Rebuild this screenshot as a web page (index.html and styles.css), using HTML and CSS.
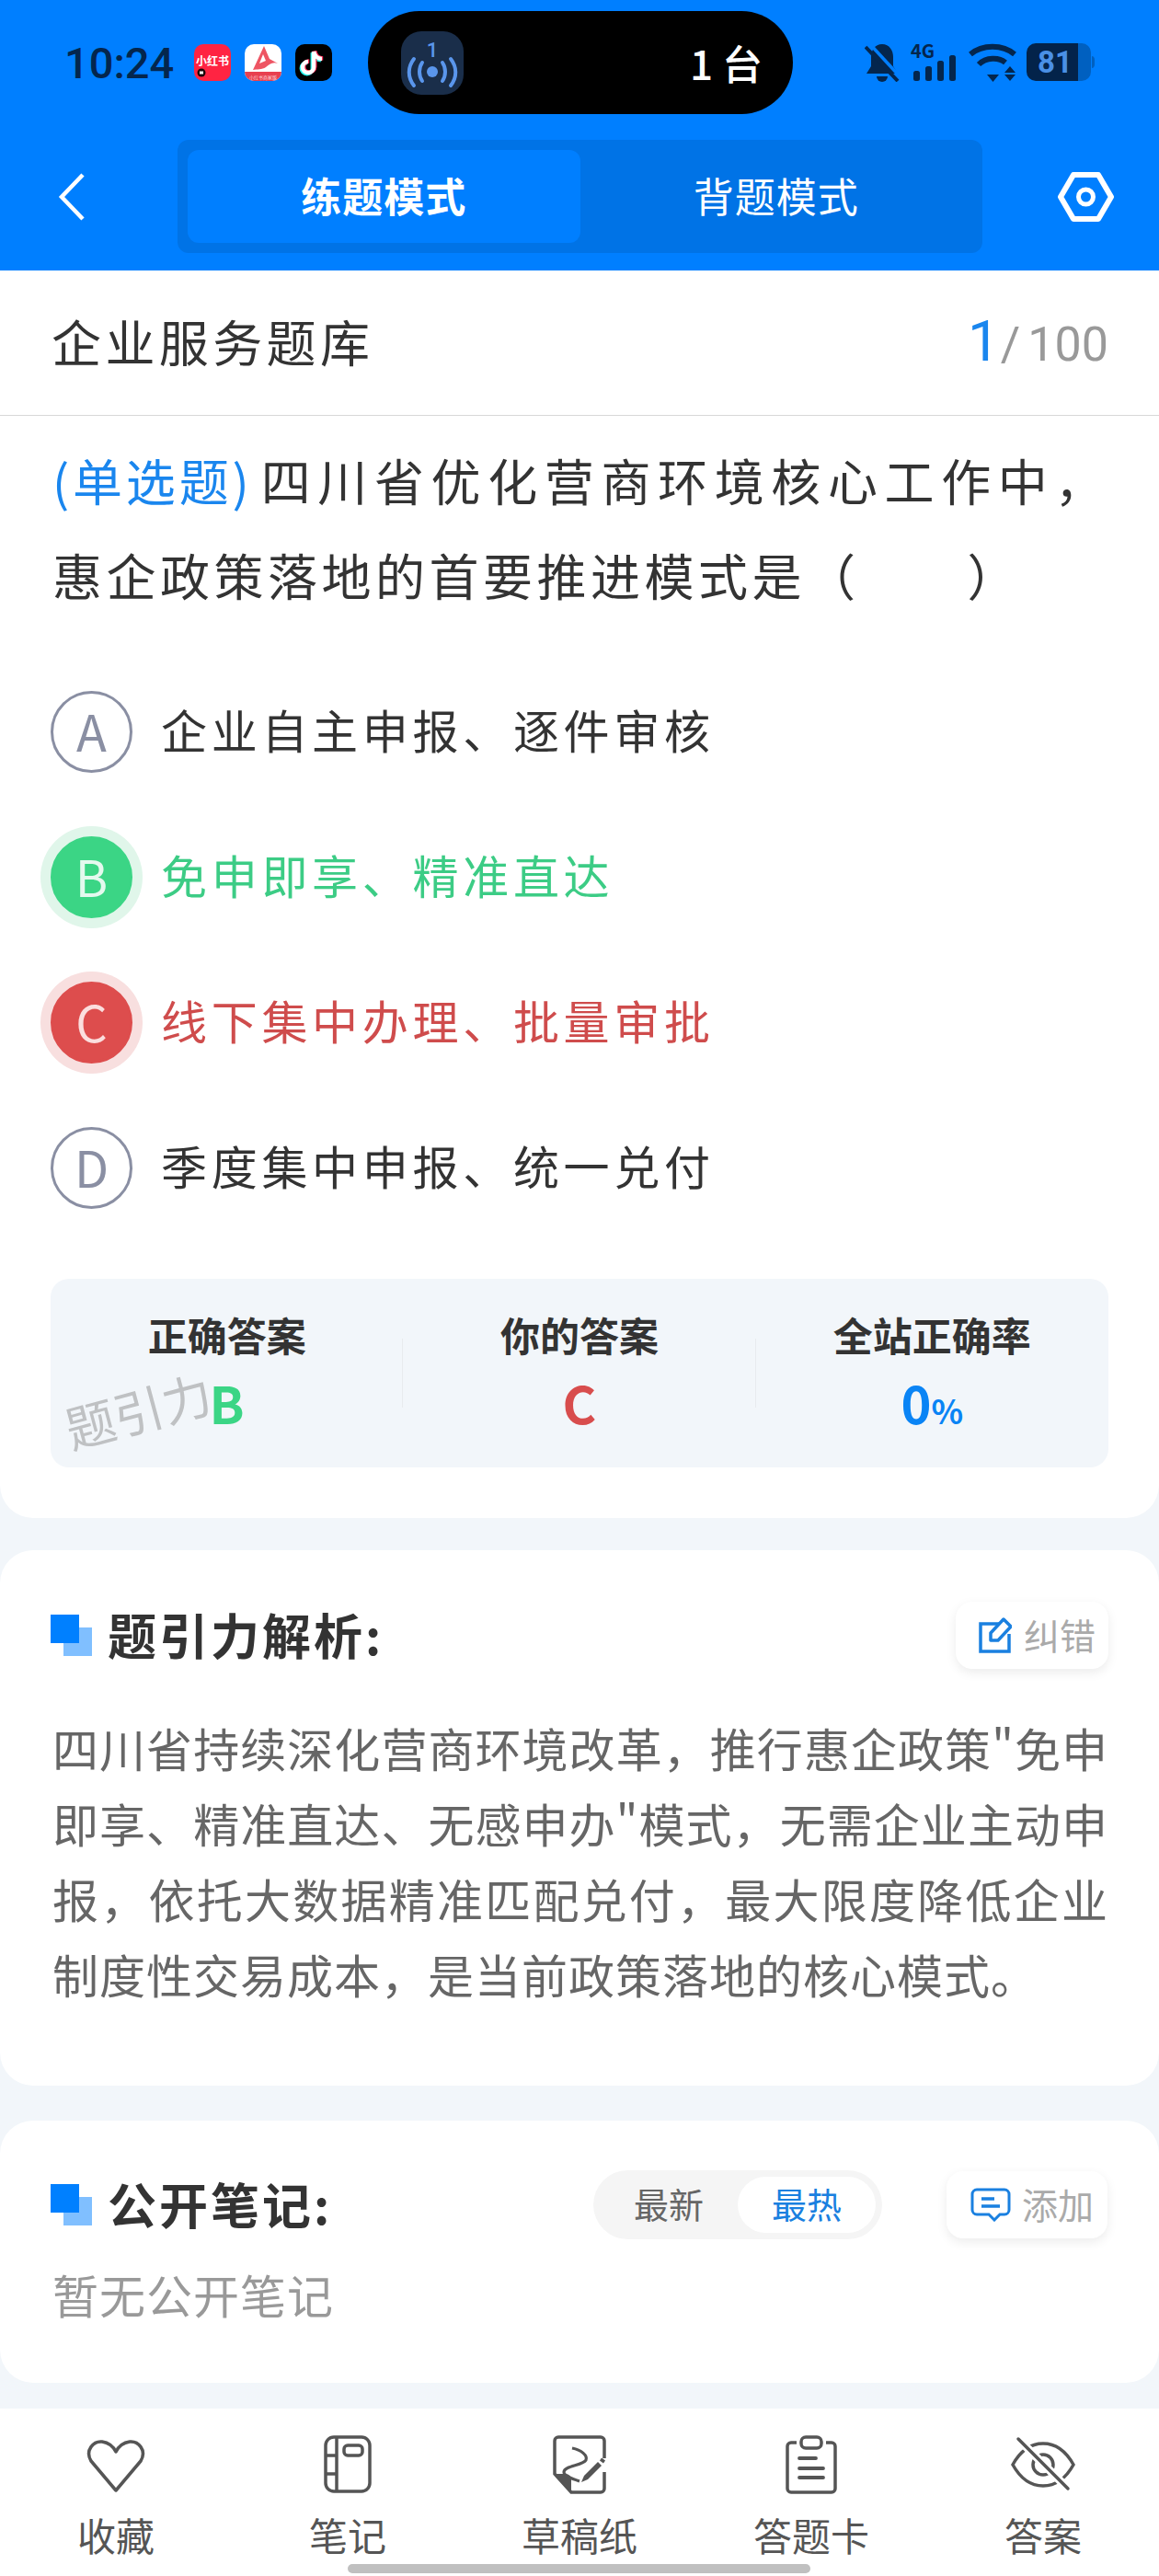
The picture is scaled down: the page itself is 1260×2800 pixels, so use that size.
FILE: index.html
```html
<!DOCTYPE html>
<html lang="zh-CN">
<head>
  <meta charset="UTF-8">
  <title>企业服务题库</title>
  <link rel="stylesheet" href="styles.css">
</head>
<body>
  <div class="app">
    <header class="top">
      <div class="status">
        <span class="time">10:24</span>
        <div class="apps">
          <svg class="app-icon" viewBox="0 0 40 40">
            <rect width="40" height="40" rx="10" fill="#ff2442"/>
            <text x="20" y="23" text-anchor="middle" class="xhs">小红书</text>
            <circle cx="8" cy="31" r="4.5" fill="#1a0508"/>
            <rect x="6" y="29.5" width="4" height="3" fill="#fff"/>
          </svg>
          <svg class="app-icon" viewBox="0 0 40 40">
            <rect width="40" height="40" rx="10" fill="#fff"/>
            <path d="M0 30H40A10 10 0 0 1 30 40H10A10 10 0 0 1 0 30Z" fill="#e8404f"/>
            <path d="M21 2L27 16L36 21C30 19 27 22 23 25C19 28 13 27 9 28Z" fill="#ee5563"/>
            <path d="M20 11L23 18L16 21Z" fill="#fff"/>
            <text x="20" y="38" text-anchor="middle" class="biz">小红书商家版</text>
          </svg>
          <svg class="app-icon" viewBox="0 0 40 40">
            <rect width="40" height="40" rx="10" fill="#000"/>
            <g fill="none" stroke-width="4.5">
              <path d="M20 8V25A6 6 0 1 1 14 19M20 8C21 13 25 16 29 16" stroke="#25f4ee" transform="translate(-1.2 1.2)"/>
              <path d="M20 8V25A6 6 0 1 1 14 19M20 8C21 13 25 16 29 16" stroke="#fe2c55" transform="translate(1.2 -.6)"/>
              <path d="M20 8V25A6 6 0 1 1 14 19M20 8C21 13 25 16 29 16" stroke="#fff"/>
            </g>
          </svg>
        </div>
        <div class="island">
          <svg class="island-icon" viewBox="0 0 68 69">
            <rect width="68" height="69" rx="22" fill="#1a2e4a"/>
            <text x="34" y="28" text-anchor="middle" class="cast-num">1</text>
            <circle cx="34" cy="44" r="6" fill="#5a96ec"/>
            <g fill="none" stroke="#5a96ec" stroke-width="4" stroke-linecap="round">
              <path d="M23 34C19 40 19 48 23 54M45 34C49 40 49 48 45 54"/>
              <path d="M14 30C7 39 7 50 14 59M54 30C61 39 61 50 54 59"/>
            </g>
          </svg>
          <span class="island-text">1 台</span>
        </div>
        <div class="sys">
          <svg class="ic-bell" viewBox="0 0 38 42">
            <path d="M19 1C27 1 31 8 31 15V25L36 33H2L7 25V15C7 8 11 1 19 1Z" fill="#04264d"/>
            <path d="M13 36H25A6 6 0 0 1 13 36Z" fill="#04264d"/>
            <path d="M4 -1L39 37" stroke="#007fff" stroke-width="3.5"/>
            <path d="M1 4L36 41" stroke="#04264d" stroke-width="4"/>
          </svg>
          <svg class="ic-signal" viewBox="0 -10 50 52">
            <text x="0" y="16" class="net">4G</text>
            <g fill="#04264d">
              <rect x="3" y="30" width="7" height="11" rx="2.5"/>
              <rect x="16" y="25" width="7" height="16" rx="2.5"/>
              <rect x="29" y="19" width="7" height="22" rx="2.5"/>
              <rect x="42" y="13" width="7" height="28" rx="2.5"/>
            </g>
          </svg>
          <svg class="ic-wifi" viewBox="0 0 52 42">
            <path d="M2 12C15 1 37 1 50 12" fill="none" stroke="#04264d" stroke-width="6"/>
            <path d="M11 23C19 15 33 15 40 21" fill="none" stroke="#04264d" stroke-width="6"/>
            <path d="M20 34H33L26.5 42Z" fill="#04264d"/>
            <path d="M45 25L51 32H39ZM39 34H51L45 41Z" fill="#04264d"/>
          </svg>
          <svg class="ic-batt" viewBox="0 0 74 42">
            <path d="M10 0H56V41H10A10 10 0 0 1 0 31V10A10 10 0 0 1 10 0Z" fill="#03234a"/>
            <path d="M56 0H60A10 10 0 0 1 70 10V31A10 10 0 0 1 60 41H56Z" fill="#0060c0"/>
            <path d="M71 14C73 14 74 16 74 18V23C74 25 73 27 71 27Z" fill="#0060c0"/>
            <text x="31" y="32" text-anchor="middle" class="batt">81</text>
          </svg>
        </div>
      </div>
      <nav class="nav">
        <svg class="back" viewBox="0 0 30 52">
          <path d="M27 2L4 26L27 50" fill="none" stroke="#fff" stroke-width="4.5"/>
        </svg>
        <div class="mode">
          <div class="mode-item on">练题模式</div>
          <div class="mode-item">背题模式</div>
        </div>
        <svg class="gear" viewBox="0 0 61 54">
          <path d="M17 3H44L58 27L44 51H17L3 27Z" fill="none" stroke="#fff" stroke-width="6" stroke-linejoin="round"/>
          <circle cx="30.5" cy="27" r="8" fill="none" stroke="#fff" stroke-width="5"/>
        </svg>
      </nav>
    </header>

    <section class="card card-main">
      <div class="bank">
        <span class="bank-name">企业服务题库</span>
        <span class="count"><b>1</b><i>/</i>100</span>
      </div>
      <div class="question">
        <div class="q-line first"><span class="q-type">(单选题)</span><span>四川省优化营商环境核心工作中，</span></div>
        <div class="q-line">惠企政策落地的首要推进模式是（　　）</div>
      </div>
      <ul class="options">
        <li class="opt"><span class="letter">A</span><span class="opt-text">企业自主申报、逐件审核</span></li>
        <li class="opt right"><span class="letter">B</span><span class="opt-text">免申即享、精准直达</span></li>
        <li class="opt wrong"><span class="letter">C</span><span class="opt-text">线下集中办理、批量审批</span></li>
        <li class="opt"><span class="letter">D</span><span class="opt-text">季度集中申报、统一兑付</span></li>
      </ul>
      <div class="result">
        <div class="res-col">
          <div class="res-label">正确答案</div>
          <div class="res-val green">B</div>
        </div>
        <div class="res-col">
          <div class="res-label">你的答案</div>
          <div class="res-val red">C</div>
        </div>
        <div class="res-col">
          <div class="res-label">全站正确率</div>
          <div class="res-val blue">0<small>%</small></div>
        </div>
        <span class="watermark">题引力</span>
      </div>
    </section>

    <section class="card card-note">
      <div class="sec-head">
        <svg class="sec-icon" viewBox="0 0 45 45">
          <rect x="14" y="14" width="31" height="31" fill="#80bfff"/>
          <rect width="31" height="31" fill="#0080ff"/>
        </svg>
        <h3 class="sec-title">题引力解析:</h3>
        <div class="tool-btn fix">
          <svg class="ic-pen" viewBox="0 0 36 40">
            <path d="M22 7H2V37H33V18" fill="none" stroke="#1a80e0" stroke-width="3.5"/>
            <path d="M13 25V17L27 2L35 10L21 25Z" fill="none" stroke="#1a80e0" stroke-width="3.5" stroke-linejoin="round"/>
          </svg>
          <span class="tool-text">纠错</span>
        </div>
      </div>
      <p class="analysis">四川省持续深化营商环境改革，推行惠企政策"免申即享、精准直达、无感申办"模式，无需企业主动申报，依托大数据精准匹配兑付，最大限度降低企业制度性交易成本，是当前政策落地的核心模式。</p>
    </section>

    <section class="card card-public">
      <div class="sec-head">
        <svg class="sec-icon" viewBox="0 0 45 45">
          <rect x="14" y="14" width="31" height="31" fill="#80bfff"/>
          <rect width="31" height="31" fill="#0080ff"/>
        </svg>
        <h3 class="sec-title">公开笔记:</h3>
        <div class="sort">
          <span class="sort-item">最新</span>
          <span class="sort-item on">最热</span>
        </div>
        <div class="tool-btn add">
          <svg class="ic-msg" viewBox="0 0 44 37">
            <path d="M7 2H37A5 5 0 0 1 42 7V24A5 5 0 0 1 37 29H32L26 35L20 29H7A5 5 0 0 1 2 24V7A5 5 0 0 1 7 2Z" fill="none" stroke="#1a80e0" stroke-width="3"/>
            <path d="M12 12H26M12 20H32" stroke="#1a80e0" stroke-width="3.5"/>
          </svg>
          <span class="tool-text">添加</span>
        </div>
      </div>
      <p class="empty">暂无公开笔记</p>
    </section>

    <footer class="tabs">
      <div class="tab">
        <svg class="tab-ic" viewBox="0 0 70 64">
          <path d="M35 60L8 28C1 16 11 6 20 7C27 8 32 12 35 18C38 12 43 8 50 7C59 6 69 16 62 28Z" fill="none" stroke="#555" stroke-width="3.5" stroke-linejoin="round"/>
        </svg>
        <span>收藏</span>
      </div>
      <div class="tab">
        <svg class="tab-ic" viewBox="0 0 70 64">
          <rect x="11" y="2" width="48" height="59" rx="9" fill="none" stroke="#555" stroke-width="3.5"/>
          <path d="M23 2V61M11 22H23M11 42H23" fill="none" stroke="#555" stroke-width="3.5"/>
          <rect x="31" y="11" width="20" height="11" rx="4" fill="none" stroke="#555" stroke-width="3.5"/>
        </svg>
        <span>笔记</span>
      </div>
      <div class="tab">
        <svg class="tab-ic" viewBox="0 0 70 64">
          <path d="M62 25V6A4 4 0 0 0 58 2H12A4 4 0 0 0 8 6V42L26 62H58A4 4 0 0 0 62 58V40" fill="none" stroke="#555" stroke-width="3.5"/>
          <path d="M8 42H20A6 6 0 0 1 26 48V62Z" fill="#555"/>
          <path d="M27 14C37 16 44 22 42 27C39 33 18 33 18 40C18 44 26 47 35 50" fill="none" stroke="#555" stroke-width="3.2"/>
          <path d="M40 44L37 51L44 48L59 33L55 29Z" fill="#555"/>
          <path d="M58 26L62 29" stroke="#555" stroke-width="3.5"/>
        </svg>
        <span>草稿纸</span>
      </div>
      <div class="tab">
        <svg class="tab-ic" viewBox="0 0 70 64">
          <path d="M19 8H13A4 4 0 0 0 9 12V58A4 4 0 0 0 13 62H57A4 4 0 0 0 61 58V12A4 4 0 0 0 57 8H51" fill="none" stroke="#555" stroke-width="3.5"/>
          <rect x="24" y="2" width="22" height="12" rx="5" fill="none" stroke="#555" stroke-width="3.5"/>
          <path d="M22 25H40M22 36H48M22 46H48" stroke="#555" stroke-width="3.8" stroke-linecap="round"/>
        </svg>
        <span>答题卡</span>
      </div>
      <div class="tab">
        <svg class="tab-ic" viewBox="0 0 70 64">
          <path d="M2 32C12 14 24 9 35 9C46 9 58 14 68 32C58 50 46 55 35 55C24 55 12 50 2 32Z" fill="none" stroke="#555" stroke-width="3.5"/>
          <path d="M24 32A11 11 0 0 1 46 32A11 11 0 0 1 24 32Z" fill="none" stroke="#555" stroke-width="3.5"/>
          <path d="M8 4L62 58" stroke="#fff" stroke-width="9"/>
          <path d="M8 4L62 58" stroke="#555" stroke-width="3.5" stroke-linecap="round"/>
        </svg>
        <span>答案</span>
      </div>
      <div class="home-bar"></div>
    </footer>
  </div>
</body>
</html>
```

FILE: styles.css
```css
* {
  box-sizing: border-box;
}
body {
  margin: 0;
  font-family: "Noto Sans CJK SC", "Noto Sans", sans-serif;
  color: #333;
  background: #f2f6fa;
}
p, ul, h3 {
  margin: 0;
  padding: 0;
}
svg {
  display: block;
  flex: none;
}
.app {
  width: 1260px;
  height: 2800px;
  overflow: hidden;
  display: flex;
  flex-direction: column;
}

/* header */
.top {
  height: 294px;
  background: #007fff;
  padding-top: 12px;
}
.status {
  height: 112px;
  display: flex;
  align-items: center;
  padding-left: 70px;
}
.time {
  width: 141px;
  font-family: Roboto, sans-serif;
  font-weight: 500;
  font-size: 47px;
  color: #04264d;
}
.apps {
  display: flex;
  gap: 15px;
}
.app-icon {
  width: 40px;
  height: 40px;
}
.xhs {
  font-size: 12px;
  font-weight: 700;
  fill: #fff;
}
.biz {
  font-size: 5px;
  fill: #ffd5d9;
}
.island {
  margin-left: 39px;
  width: 462px;
  height: 112px;
  border-radius: 56px;
  background: #000;
  display: flex;
  align-items: center;
  justify-content: space-between;
  padding: 0 33px 0 36px;
}
.island-icon {
  width: 68px;
  height: 69px;
}
.cast-num {
  font-family: Roboto, sans-serif;
  font-size: 22px;
  font-weight: 500;
  fill: #5a96ec;
}
.island-text {
  color: #fff;
  font-size: 44px;
  font-weight: 500;
  line-height: 1;
}
.sys {
  margin-left: 78px;
  display: flex;
  align-items: center;
}
.ic-bell {
  width: 38px;
  height: 42px;
}
.ic-signal {
  width: 50px;
  height: 52px;
  margin: -10px 0 0 12px;
}
.ic-wifi {
  width: 52px;
  height: 42px;
  margin-left: 13px;
}
.ic-batt {
  width: 74px;
  height: 42px;
  margin-left: 11px;
}
.net {
  font-size: 20px;
  font-weight: 700;
  fill: #04264d;
}
.batt {
  font-family: Roboto, sans-serif;
  font-size: 33px;
  font-weight: 700;
  fill: #4a90e6;
}
.nav {
  margin-top: 28px;
  height: 123px;
  display: flex;
  align-items: center;
  padding-left: 63px;
}
.back {
  width: 30px;
  height: 52px;
}
.mode {
  margin-left: 100px;
  width: 875px;
  height: 123px;
  padding: 11px;
  background: #0073e6;
  border-radius: 12px;
  display: flex;
}
.mode-item {
  flex: 1;
  border-radius: 12px;
  padding-bottom: 4px;
  color: #fff;
  font-size: 44px;
  letter-spacing: 1px;
  display: flex;
  align-items: center;
  justify-content: center;
}
.mode-item.on {
  background: #007fff;
  font-weight: 700;
}
.gear {
  width: 61px;
  height: 54px;
  margin-left: 82px;
}

/* cards */
.card {
  background: #fff;
  border-radius: 36px;
}
.card-main {
  height: 1356px;
  border-radius: 0 0 36px 36px;
}
.bank {
  height: 158px;
  padding: 0 55px 4px 56px;
  border-bottom: 1px solid #d8d8d8;
  display: flex;
  align-items: center;
  justify-content: space-between;
}
.bank-name {
  font-size: 54px;
  letter-spacing: 4.4px;
}
.count {
  font-family: Roboto, sans-serif;
  font-size: 52px;
  color: #999;
}
.count b {
  font-weight: 400;
  font-size: 62px;
  color: #1a86ee;
}
.count i {
  font-style: normal;
  margin: 0 8px 0 1px;
}
.question {
  padding: 18px 55px 0 57px;
  font-size: 54px;
  line-height: 103px;
  letter-spacing: 4.5px;
  height: 226px;
}
.q-line.first {
  text-align: justify;
  text-align-last: justify;
}
.q-type {
  display: inline-block;
  margin-right: 6px;
  letter-spacing: 3.8px;
  color: #1a86ee;
}
.options {
  list-style: none;
  margin-top: 38px;
  padding-left: 55px;
}
.opt {
  height: 158px;
  display: flex;
  align-items: center;
  gap: 31px;
  font-size: 50px;
  letter-spacing: 4.7px;
}
.opt-text {
  margin-bottom: 6px;
}
.letter {
  width: 89px;
  height: 89px;
  padding-bottom: 3px;
  border-radius: 50%;
  border: 3px solid #8a8fa3;
  color: #8a8fa3;
  font-size: 54px;
  letter-spacing: 0;
  display: flex;
  align-items: center;
  justify-content: center;
}
.right {
  color: #3ccc85;
}
.right .letter {
  background: #3bd585;
  border-color: #3bd585;
  color: #e4f9ee;
  box-shadow: 0 0 0 11px #e0f6ea;
}
.wrong {
  color: #cf4c4c;
}
.wrong .letter {
  background: #dd4d4d;
  border-color: #dd4d4d;
  color: #fbdede;
  box-shadow: 0 0 0 11px #f8dfdf;
}
.result {
  position: relative;
  margin: 42px 55px 0;
  height: 205px;
  background: #f2f6fa;
  border-radius: 20px;
  display: flex;
}
.res-col {
  flex: 1;
  text-align: center;
  padding-top: 31px;
  background: linear-gradient(#e8ebee, #e8ebee) right 65px / 1px 75px no-repeat;
}
.res-col:last-of-type {
  background: none;
}
.res-label {
  font-size: 43px;
  font-weight: 700;
  line-height: 58px;
}
.res-val {
  font-size: 56px;
  font-weight: 700;
  line-height: 66px;
  margin-top: 12px;
}
.res-val small {
  font-size: 36px;
}
.green {
  color: #3bd585;
}
.red {
  color: #d84d4d;
}
.blue {
  color: #0a84f5;
}
.watermark {
  position: absolute;
  left: 14px;
  top: 109px;
  font-size: 54px;
  line-height: 66px;
  color: rgba(140, 140, 140, .5);
  transform: rotate(-15deg);
}
.card-note {
  margin-top: 35px;
  height: 582px;
  padding: 56px 55px 0 55px;
}
.card-public {
  margin-top: 38px;
  height: 285px;
  padding: 54px 56px 0 55px;
}
.sec-head {
  display: flex;
  align-items: center;
}
.sec-icon {
  width: 45px;
  height: 45px;
  margin-right: 17px;
}
.sec-title {
  flex: 1;
  padding-bottom: 4px;
  font-size: 53px;
  line-height: 64px;
  font-weight: 700;
  letter-spacing: 3px;
}
.tool-btn {
  height: 73px;
  border-radius: 18px;
  background: #fff;
  box-shadow: 0 4px 12px rgba(0, 0, 0, .08);
  font-size: 39px;
  color: #aaa;
  display: flex;
  align-items: center;
}
.tool-text {
  margin-bottom: 4px;
  line-height: 56px;
}
.fix {
  width: 166px;
  padding-left: 25px;
  gap: 13px;
}
.add {
  width: 175px;
  padding-left: 26px;
  gap: 12px;
}
.ic-pen {
  width: 36px;
  height: 40px;
}
.ic-msg {
  width: 44px;
  height: 37px;
}
.analysis {
  margin-top: 44px;
  padding-left: 2px;
  font-size: 50px;
  line-height: 82px;
  letter-spacing: 1px;
  color: #666;
  text-align: justify;
}
.sort {
  width: 314px;
  height: 75px;
  padding: 7px;
  margin-right: 70px;
  border-radius: 38px;
  background: #f5f5f5;
  display: flex;
}
.sort-item {
  flex: 1;
  padding-bottom: 4px;
  border-radius: 31px;
  font-size: 38px;
  color: #666;
  display: flex;
  align-items: center;
  justify-content: center;
}
.sort-item.on {
  background: #fff;
  color: #1a80e0;
}
.empty {
  margin-top: 29px;
  padding-left: 2px;
  font-size: 50px;
  line-height: 60px;
  letter-spacing: 1px;
  color: #999;
}

/* bottom bar */
.tabs {
  position: relative;
  margin-top: 28px;
  height: 182px;
  background: #fff;
  display: flex;
  padding-top: 29px;
}
.tab {
  flex: 1;
  display: flex;
  flex-direction: column;
  align-items: center;
  font-size: 42px;
  color: #555;
}
.tab-ic {
  width: 70px;
  height: 64px;
}
.tab span {
  margin-top: 15px;
  line-height: 58px;
}
.home-bar {
  position: absolute;
  left: 378px;
  bottom: 3px;
  width: 503px;
  height: 10px;
  border-radius: 5px;
  background: #c0c0c0;
}
```
